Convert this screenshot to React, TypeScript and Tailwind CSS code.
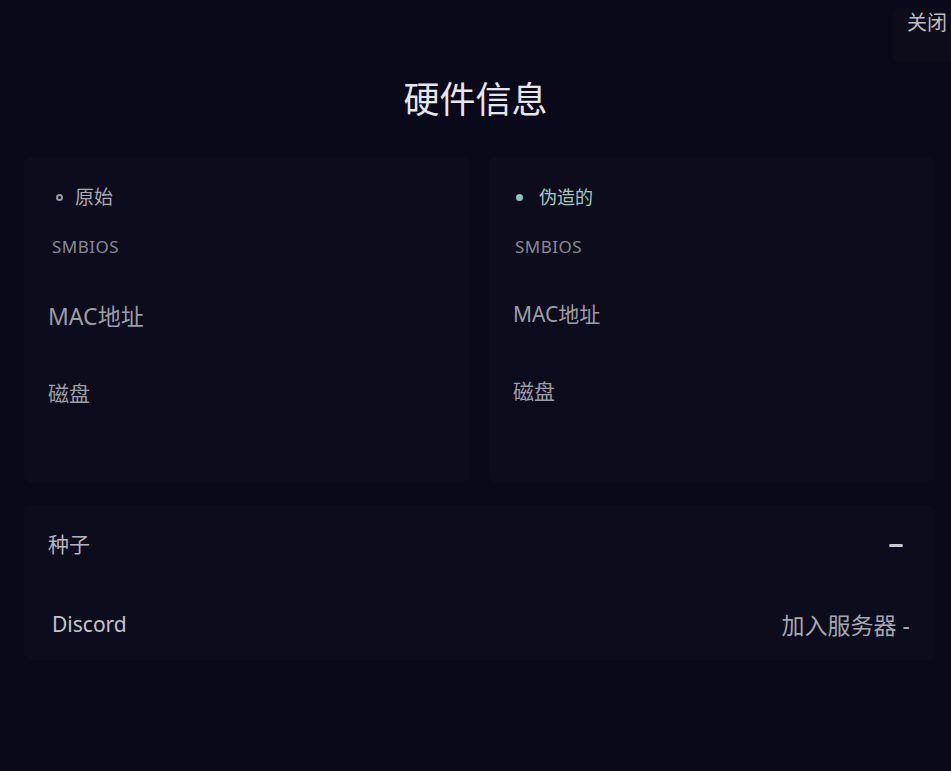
import React from "react";

const font = "font-['Noto_Sans','Noto_Sans_CJK_SC',sans-serif]";

function InfoCard({
  label,
  active,
}: {
  label: string;
  active?: boolean;
}) {
  return (
    <div className="h-[325px] rounded-md bg-[#0c0c1c] pl-6 pr-4 pt-7">
      <div className={active ? "flex items-center h-6 pl-[3px]" : "flex items-center h-6 pl-2"}>
        {active ? (
          <span className="w-[7px] h-[7px] rounded-full bg-[#8ec3bd]" />
        ) : (
          <span className="w-[7px] h-[7px] rounded-full border-2 border-[#9a9aa4]" />
        )}
        <span
          className={
            active
              ? "ml-[16px] text-[18px] leading-6 text-[#a3c9c5]"
              : "ml-[12px] text-[19px] leading-6 text-[#aaaab4]"
          }
        >
          {label}
        </span>
      </div>
      <div
        className={
          active
            ? "mt-[28px] pl-[2px] text-[17px] leading-5 tracking-[0.5px] text-[#8a8a95]"
            : "mt-[28px] pl-1 text-[17px] leading-5 tracking-[0.5px] text-[#8a8a95]"
        }
      >
        SMBIOS
      </div>
      <div
        className={
          active
            ? "mt-[42px] text-[21px] leading-[30px] text-[#9d9da8]"
            : "mt-[44px] text-[23px] leading-[30px] text-[#9d9da8]"
        }
      >
        MAC地址
      </div>
      <div className="mt-[47px] text-[21px] leading-[30px] text-[#9d9da8]">磁盘</div>
    </div>
  );
}

export default function App() {
  return (
    <div className={`h-[771px] w-full overflow-hidden bg-[#09091a] ${font}`}>
      <div className="flex justify-end pt-2">
        <button className="w-[58px] h-[54px] rounded-l-md bg-[#0c0c1b] flex items-start justify-end pr-[4px] pt-[1px] text-[20px] leading-[28px] text-[#bcbcc5]">
          关闭
        </button>
      </div>

      <h1 className="mt-[14px] text-center text-[36px] leading-[48px] text-[#e6e6ec]">硬件信息</h1>

      <div className="pl-6 pr-[17px]">
        <div className="mt-[33px] grid grid-cols-2 gap-5">
          <InfoCard label="原始" />
          <InfoCard label="伪造的" active />
        </div>

        <div className="mt-[23px] rounded-md bg-[#0c0c1c] pl-6 pr-6 pt-[25px] pb-5">
          <div className="flex items-center justify-between h-[30px]">
            <span className="text-[21px] text-[#b4b4bd]">种子</span>
            <span className="mr-[7px] w-[14px] h-[3px] rounded-sm bg-[#c8c8d0]" />
          </div>
          <div className="mt-[50px] flex items-center justify-between h-[30px]">
            <span className="pl-1 text-[21px] text-[#c4c4cc]">Discord</span>
            <span className="text-[23px] text-[#a7a7b0]">加入服务器 -</span>
          </div>
        </div>
      </div>
    </div>
  );
}
